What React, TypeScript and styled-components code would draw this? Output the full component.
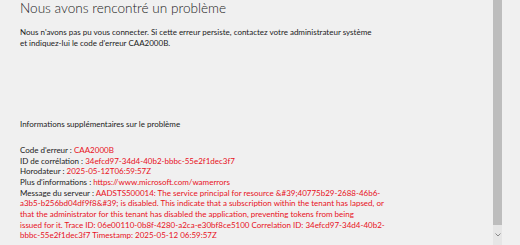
import styled, { createGlobalStyle } from 'styled-components'

const GlobalStyle = createGlobalStyle`
  html, body {
    margin: 0;
    padding: 0;
    background: #f0f0f0;
    overflow: hidden;
  }
  body {
    font-family: Lato, "Open Sans", sans-serif;
  }
`

const Page = styled.div`
  display: flex;
  width: 520px;
  height: 245px;
  background: #f0f0f0;
  overflow: hidden;
`

const Content = styled.main`
  flex: 1;
  padding: 0 0 0 20px;
  color: #1b1b1b;
  font-size: 8px;
  line-height: 10.67px;
`

const Title = styled.h1`
  margin: 0;
  font-family: Lato, "Open Sans", sans-serif;
  font-weight: 300;
  font-size: 13.6px;
  line-height: 17px;
  color: #1b1b1b;
`

const Paragraph = styled.p<{ $top?: number }>`
  margin: ${({ $top = 0 }) => $top}px 0 0;
  white-space: nowrap;
`

const Value = styled.span`
  color: #e81123;
`

const Link = styled.a`
  color: #e81123;
  text-decoration: none;
`

const Scrollbar = styled.div`
  display: flex;
  flex-direction: column;
  width: 9px;
  margin-right: 18px;
  background: #e6e6e6;
`

const Thumb = styled.div`
  flex: 1;
  background: #bdbdbd;
`

const ArrowButton = styled.div`
  height: 20px;
  display: flex;
  align-items: center;
  justify-content: center;
`

function App() {
  return (
    <>
      <GlobalStyle />
      <Page>
        <Content>
          <Title>Nous avons rencontré un problème</Title>
          <Paragraph $top={10}>
            Nous n'avons pas pu vous connecter. Si cette erreur persiste, contactez votre administrateur système
            <br />
            et indiquez-lui le code d'erreur CAA2000B.
          </Paragraph>
          <Paragraph $top={71}>Informations supplémentaires sur le problème</Paragraph>
          <Paragraph $top={15}>
            Code d'erreur : <Value>CAA2000B</Value>
            <br />
            ID de corrélation : <Value>34efcd97-34d4-40b2-bbbc-55e2f1dec3f7</Value>
            <br />
            Horodateur : <Value>2025-05-12T06:59:57Z</Value>
            <br />
            Plus d'informations : <Link href="#">https://www.microsoft.com/wamerrors</Link>
            <br />
            Message du serveur : <Value>AADSTS500014: The service principal for resource &amp;#39;40775b29-2688-46b6-
            <br />
            a3b5-b256bd04df9f8&amp;#39; is disabled. This indicate that a subscription within the tenant has lapsed, or
            <br />
            that the administrator for this tenant has disabled the application, preventing tokens from being
            <br />
            issued for it. Trace ID: 06e00110-0b8f-4280-a2ca-e30bf8ce5100 Correlation ID: 34efcd97-34d4-40b2-
            <br />
            bbbc-55e2f1dec3f7 Timestamp: 2025-05-12 06:59:57Z</Value>
          </Paragraph>
        </Content>
        <Scrollbar>
          <Thumb />
          <ArrowButton>
            <svg width="6" height="4" viewBox="0 0 6 4">
              <path d="M0.5 0.5 L3 3 L5.5 0.5" fill="none" stroke="#8a8a8a" strokeWidth="1" />
            </svg>
          </ArrowButton>
        </Scrollbar>
      </Page>
    </>
  )
}

export default App
